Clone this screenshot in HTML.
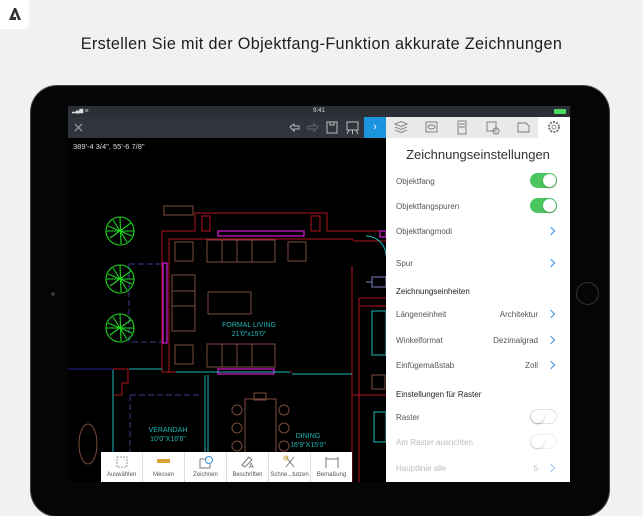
<!DOCTYPE html>
<html><head><meta charset="utf-8"><style>
*{margin:0;padding:0;box-sizing:border-box}
body{width:643px;height:482px;overflow:hidden;background:#f1f1f1;font-family:"Liberation Sans",sans-serif;position:relative}
.logo{position:absolute;left:0;top:0;width:29px;height:29px;background:#fff;border-radius:0 0 6px 0}
.h{position:absolute;left:0;width:643px;top:35px;text-align:center;font-size:16.2px;color:#1d1d1d;letter-spacing:.35px}
.ipad{position:absolute;left:31px;top:86px;width:578px;height:430px;background:#050505;border-radius:26px;box-shadow:0 0 0 1px #444}
.home{position:absolute;left:576px;top:282px;width:23px;height:23px;border-radius:50%;border:1.5px solid #333}
.cam{position:absolute;left:51px;top:292px;width:4px;height:4px;border-radius:50%;background:#333}
.scr{position:absolute;left:68px;top:106px;width:502px;height:376px;background:#000;overflow:hidden}
.sb{position:absolute;left:0;top:0;width:502px;height:11px;background:#2b2f36;color:#ddd;font-size:6px;text-align:center;line-height:11px}
.tb{position:absolute;left:0;top:11px;width:318px;height:21px;background:#30343c}
.blue{position:absolute;left:296px;top:11px;width:22px;height:21px;background:#1c95df;color:#fff;font-size:11px;text-align:center;line-height:20px}
.panel{position:absolute;left:318px;top:11px;width:184px;height:365px;background:#fff}
.icons{position:absolute;left:0;top:0;width:184px;height:21px;background:#e9e9e9}
.gear{position:absolute;left:152px;top:0;width:32px;height:21px;background:#fff}
.title{position:absolute;left:0;width:184px;top:30px;text-align:center;font-size:13px;color:#333}
.row{position:absolute;left:10px;font-size:8px;color:#555}
.hd{position:absolute;left:10px;font-size:8px;color:#222}
.val{position:absolute;right:32px;font-size:8px;color:#555;text-align:right}
.chev{position:absolute;left:162px;width:6px;height:6px;border-right:1.3px solid #3a8fdc;border-top:1.3px solid #3a8fdc;transform:rotate(45deg)}
.tg{position:absolute;left:144px;width:27px;height:15px;border-radius:8px;background:#4cc760}
.tg:after{content:"";position:absolute;right:1px;top:1px;width:13px;height:13px;border-radius:50%;background:#fff;box-shadow:0 1px 2px rgba(0,0,0,.3)}
.tg.off{background:#fff;border:1px solid #e3e3e3}
.tg.off:after{left:0;top:0;right:auto}
.bt{position:absolute;left:33px;top:346px;width:251px;height:30px;background:#fff;display:flex}
.bt div{flex:1;border-right:1px solid #ddd;font-size:6px;color:#555;text-align:center;padding-top:20px;position:relative;white-space:nowrap}
.bt div:last-child{border:none}
</style></head><body>
<div class="logo"><svg width="29" height="29"><path d="M9 20 L14 8 L16 8 L21 20 L18 20 L15 12 L13 17 L16 17 L16 20Z" fill="#333"/></svg></div>
<div class="h">Erstellen Sie mit der Objektfang-Funktion akkurate Zeichnungen</div>
<div class="ipad"></div>
<div class="cam"></div>
<div class="home"></div>
<div class="scr">
<svg style="position:absolute;left:0;top:0" width="502" height="376" viewBox="68 106 502 376" fill="none" stroke-width="1">
<text x="73" y="149" fill="#ddd" font-size="7.5" stroke="none" font-family="Liberation Sans">389'-4 3/4",  55'-6 7/8"</text>
<g stroke="#b0141e">
<path d="M162 372 L162 231 L195 231 L195 213 L327 213 L327 231 L386 231"/>
<path d="M169 372 L169 239 L352 239 L354 241 L386 241"/>
<rect x="202" y="216" width="8" height="15"/><rect x="311" y="216" width="9" height="15"/>
<path d="M352 266 L352 482 M359 298 L359 482 M359 298 L386 298 M359 306 L386 306"/>
<path d="M162 372 L292 372 M169 365 L169 372 M113 369 L128 369 L128 383 L122 383 L122 395 L113 395 Z"/>
<path d="M352 395 L386 395"/>
</g>
<g stroke="#d81ad8" stroke-width="1.2">
<rect x="218" y="231" width="86" height="5"/><rect x="163" y="263" width="4" height="80"/><rect x="218" y="369" width="56" height="5"/><rect x="380" y="231" width="6" height="6"/>
</g>
<g stroke="#7b4a3c">
<rect x="164" y="206" width="29" height="9"/>
<rect x="175" y="242" width="18" height="19"/><rect x="288" y="242" width="18" height="19"/>
<rect x="207" y="240" width="68" height="22"/><path d="M222 240 V262 M237 240 V262 M252 240 V262"/>
<rect x="172" y="275" width="23" height="56"/><path d="M172 291 H195 M172 306 H195"/>
<rect x="208" y="292" width="43" height="22"/>
<rect x="175" y="345" width="18" height="19"/>
<rect x="207" y="344" width="68" height="23"/><path d="M222 344 V367 M237 344 V367 M252 344 V367"/>
<rect x="245" y="399" width="31" height="60"/><rect x="254" y="393" width="12" height="7"/>
<circle cx="237" cy="410" r="5"/><circle cx="237" cy="428" r="5"/><circle cx="237" cy="446" r="5"/>
<circle cx="284" cy="410" r="5"/><circle cx="284" cy="428" r="5"/><circle cx="284" cy="446" r="5"/>
<ellipse cx="88" cy="444" rx="9" ry="20"/>
<rect x="372" y="375" width="13" height="14"/>
</g>
<g stroke="#1fb8b8">
<path d="M113 370 V482 M129 369 H162 M176 372 H290 M205 375 V482 M208 375 V482 M292 374 H352"/>
<path d="M366 236 A20 20 0 0 1 386 256"/>
<rect x="372" y="311" width="14" height="44"/>
<rect x="374" y="412" width="12" height="30"/>
</g>
<g stroke="#3a3a8c" stroke-dasharray="6 3">
<path d="M129 264 H162 M129 264 V342 H162 M130 395 H200 M130 395 V482"/>
</g>
<path d="M68 369 H113" stroke="#2424a0"/>
<path d="M366 282 H372 M372 277 H386 V287 H372Z" stroke="#8080c0"/>
<g stroke="#1fd81f" stroke-width="1.1">
<circle cx="120" cy="231" r="14"/><circle cx="120" cy="279" r="14"/><circle cx="120" cy="328" r="14"/>
<path d="M108 226 L132 236 M110 238 L131 223 M120 217 L121 244 M106 231 L134 231 M113 220 L127 242"/>
<path d="M108 274 L132 284 M110 286 L131 271 M120 265 L121 292 M106 279 L134 279 M113 268 L127 290"/>
<path d="M108 323 L132 333 M110 335 L131 320 M120 314 L121 341 M106 328 L134 328 M113 317 L127 339"/>
</g>
<g fill="#1fb8b8" stroke="none" font-size="7" font-family="Liberation Sans" text-anchor="middle">
<text x="249" y="327">FORMAL LIVING</text><text x="249" y="336">21'0"x15'0"</text>
<text x="168" y="432">VERANDAH</text><text x="168" y="441">10'0"X16'6"</text>
<text x="308" y="438">DINING</text><text x="308" y="447">16'9"X15'0"</text>
</g>
</svg>
<div class="sb"><span style="position:absolute;left:4px;font-size:5px">▂▄▆ ≋</span>9:41<span style="position:absolute;right:4px;top:3px;width:12px;height:5px;background:#4cd964;border-radius:1px"></span></div>
<div class="tb">
<svg width="296" height="21"><path d="M7 7 L14 14 M14 7 L7 14" stroke="#aaa" stroke-width="1"/>
<path d="M222 10 L226 7 V9 H231 V12 H226 V14Z" stroke="#bbb" fill="none"/>
<path d="M250 10 L246 7 V9 H240 V12 H246 V14Z" stroke="#666" fill="none"/>
<rect x="259" y="5" width="10" height="11" stroke="#bbb" fill="none"/><rect x="262" y="5" width="4" height="3" stroke="#bbb" fill="none"/>
<rect x="279" y="5" width="11" height="8" stroke="#bbb" fill="none"/><path d="M281 13 L279 17 M288 13 L290 17 M284.5 13 V17" stroke="#bbb"/>
</svg></div>
<div class="blue">›</div>
<div class="panel">
<div class="icons">
<svg width="152" height="21" stroke="#777" fill="none" stroke-width=".9">
<path d="M9 7 L15 4.5 L21 7 L15 9.5Z M9 10 L15 12.5 L21 10 M9 13 L15 15.5 L21 13"/>
<rect x="40" y="5" width="11" height="10"/><ellipse cx="45.5" cy="10" rx="3.5" ry="2"/>
<rect x="72" y="4" width="8" height="13"/><path d="M73 7 H79 M73 10 H79"/>
<rect x="101" y="5" width="9" height="9"/><circle cx="110" cy="14" r="3"/>
<path d="M132 6 H140 L143 9 V15 H132Z"/>
</svg>
<div class="gear"><svg width="32" height="21"><circle cx="16" cy="10" r="5" stroke="#777" fill="none" stroke-dasharray="2 1.2" stroke-width="2"/><circle cx="16" cy="10" r="2" stroke="#777" fill="none" stroke-width=".8"/></svg></div>
</div>
<div class="title">Zeichnungseinstellungen</div>
<div class="row" style="top:60px">Objektfang</div><div class="tg" style="top:56px"></div>
<div class="row" style="top:85px">Objektfangspuren</div><div class="tg" style="top:81px"></div>
<div class="row" style="top:110px">Objektfangmodi</div><div class="chev" style="top:111px"></div>
<div class="row" style="top:142px">Spur</div><div class="chev" style="top:143px"></div>
<div class="hd" style="top:170px">Zeichnungseinheiten</div>
<div class="row" style="top:193px">Längeneinheit</div><div class="val" style="top:193px">Architektur</div><div class="chev" style="top:194px"></div>
<div class="row" style="top:219px">Winkelformat</div><div class="val" style="top:219px">Dezimalgrad</div><div class="chev" style="top:220px"></div>
<div class="row" style="top:244px">Einfügemaßstab</div><div class="val" style="top:244px">Zoll</div><div class="chev" style="top:245px"></div>
<div class="hd" style="top:273px">Einstellungen für Raster</div>
<div class="row" style="top:296px">Raster</div><div class="tg off" style="top:292px"></div>
<div class="row" style="top:321px;color:#bbb">Am Raster ausrichten</div><div class="tg off" style="top:317px;opacity:.6"></div>
<div class="row" style="top:347px;color:#bbb">Hauptlinie alle</div><div class="val" style="top:347px;color:#bbb">5</div><div class="chev" style="top:348px;opacity:.5"></div>
</div>
<div class="bt">
<div><svg style="position:absolute;left:15px;top:4px" width="12" height="12"><rect x="1" y="1" width="10" height="10" stroke="#999" fill="none" stroke-dasharray="2 1"/></svg>Auswählen</div>
<div><svg style="position:absolute;left:14px;top:6px" width="14" height="6"><rect x="0" y="1" width="13" height="4" fill="#d9a53a"/></svg>Messen</div>
<div><svg style="position:absolute;left:13px;top:3px" width="16" height="14" stroke="#777" fill="none"><path d="M2 4 H8 M2 4 V13 H12 V9"/><circle cx="11" cy="5" r="3.5" stroke="#3a8fdc"/></svg>Zeichnen</div>
<div><svg style="position:absolute;left:13px;top:3px" width="16" height="14" stroke="#777" fill="none"><path d="M2 10 L9 2 L12 5 L5 12Z"/><text x="9" y="13" font-size="7" fill="#555" stroke="none">A</text></svg>Beschriften</div>
<div><svg style="position:absolute;left:13px;top:3px" width="16" height="14" stroke="#777" fill="none"><path d="M4 2 L12 12 M12 2 L4 12"/><circle cx="4" cy="3" r="2" stroke="#d9a53a"/></svg>Schne...tutzen</div>
<div><svg style="position:absolute;left:13px;top:3px" width="16" height="14" stroke="#777" fill="none"><path d="M2 2 V13 M14 2 V13 M2 4 H14"/></svg>Bemaßung</div>
</div>
</div>
</body></html>
